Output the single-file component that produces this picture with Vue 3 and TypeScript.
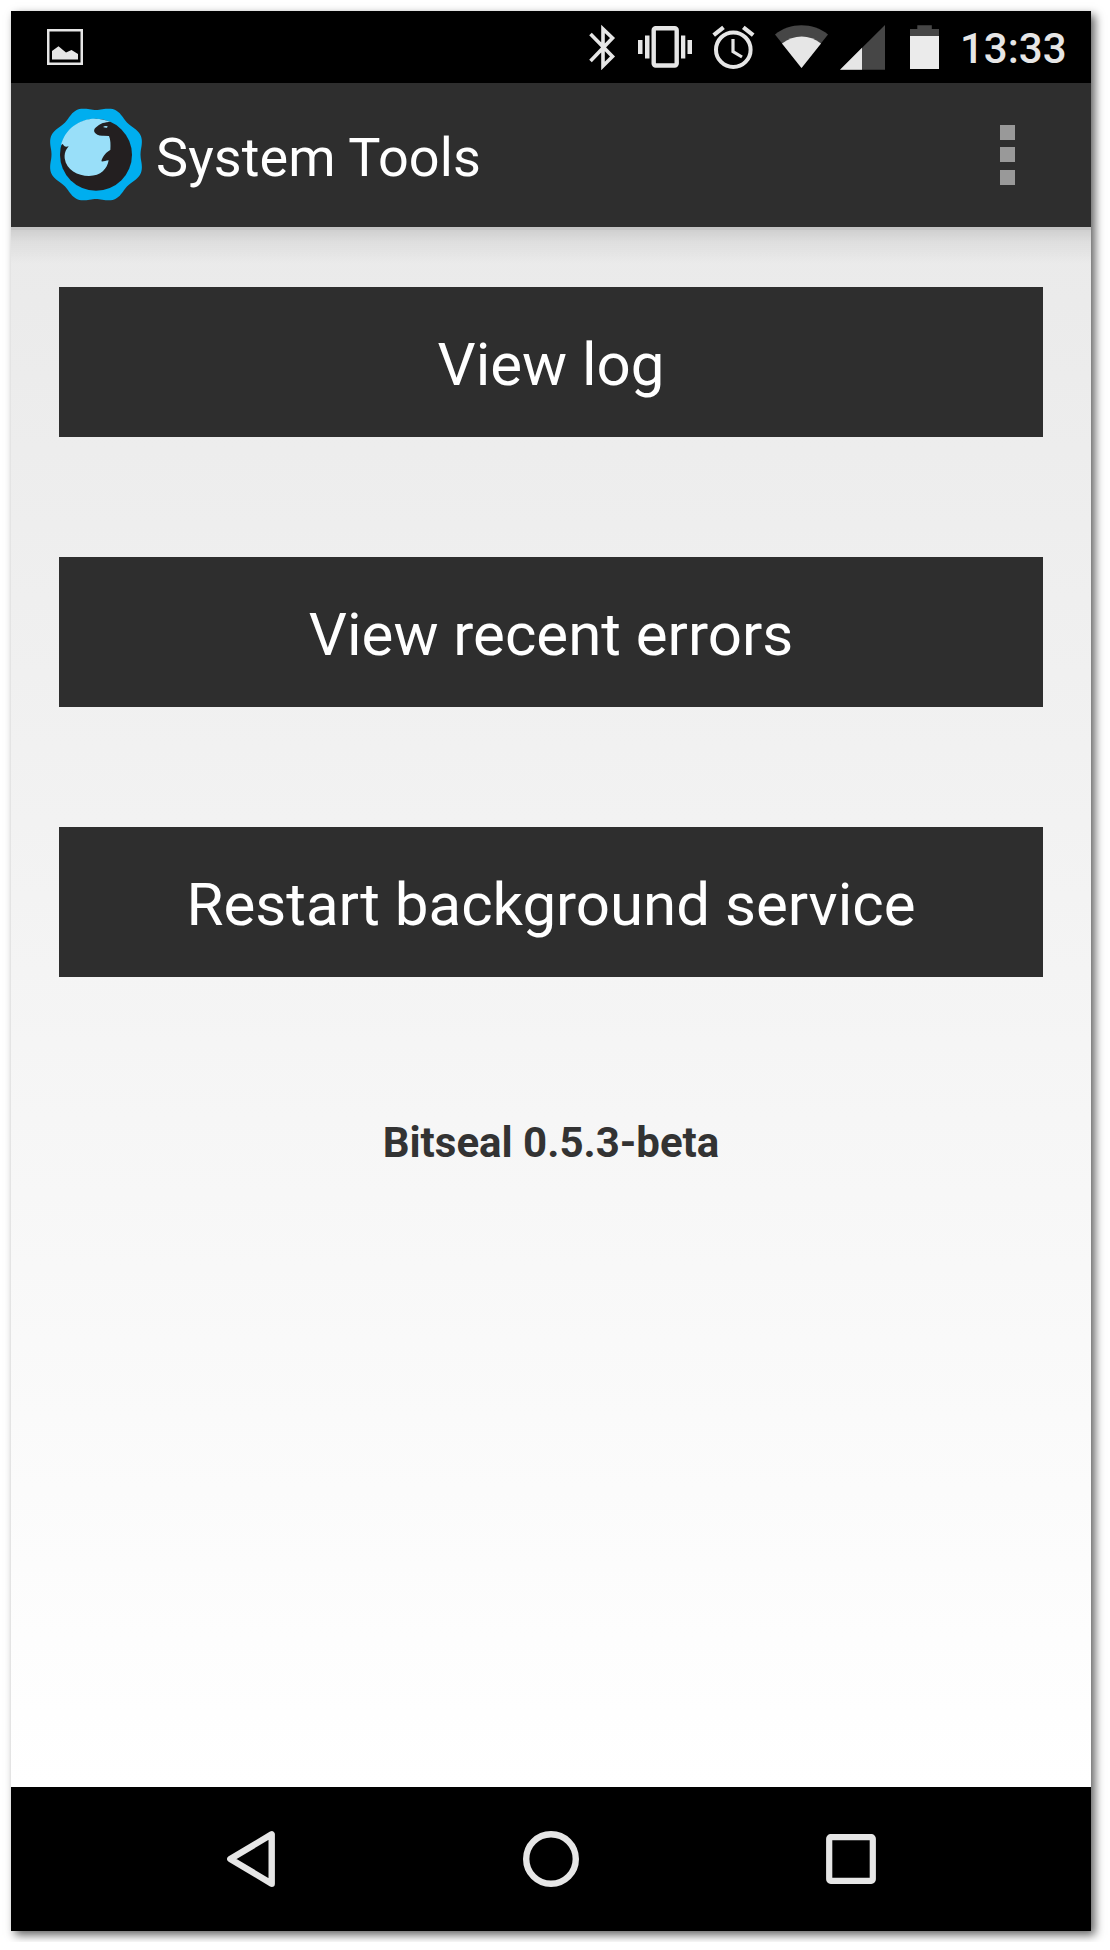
<script setup lang="ts">
interface Tool {
  id: string
  label: string
}

const tools: Tool[] = [
  { id: 'log', label: 'View log' },
  { id: 'errors', label: 'View recent errors' },
  { id: 'restart', label: 'Restart background service' },
]

// Eight-lobed badge outline behind the seal
const badgePoints: string = Array.from({ length: 180 }, (_, i) => {
  const angle = (i * 2 * Math.PI) / 180
  const radius = 139.5 + 6 * Math.cos(8 * (angle - Math.PI / 8))
  const x = 168 + radius * Math.cos(angle)
  const y = 178.5 + radius * Math.sin(angle)
  return `${x.toFixed(1)},${y.toFixed(1)}`
}).join(' ')
</script>

<template>
  <main class="phone">
    <header class="status">
      <svg class="picture" width="36" height="36" viewBox="0 0 36 36">
        <rect x="1.25" y="1.25" width="33.5" height="33.5" fill="none" stroke="#e6e6e6" stroke-width="2.5" />
        <path d="M5 30.5V22L11.500 17.200L19 23.500L24.500 21L31 25V30.500Z" fill="#e6e6e6" />
      </svg>
      <svg class="bluetooth" width="27" height="72" viewBox="589 11 27 72">
        <path d="M590.5 34L612.500 56.500L603 66V29L612.500 38L590.500 61" fill="none" stroke="#e6e6e6" stroke-width="3.6" />
      </svg>
      <svg class="vibrate" width="54" height="72" viewBox="638 11 54 72">
        <g fill="#e6e6e6">
          <rect x="638" y="40" width="4.500" height="14" />
          <rect x="645" y="35.500" width="4.500" height="23" />
          <rect x="681" y="35.500" width="4.300" height="23" />
          <rect x="687.500" y="40" width="4.500" height="14" />
        </g>
        <rect x="653.700" y="28.200" width="23" height="37.300" rx="2" fill="none" stroke="#e6e6e6" stroke-width="4.400" />
      </svg>
      <svg class="alarm" width="43" height="72" viewBox="712 11 43 72">
        <g fill="none" stroke="#e6e6e6">
          <circle cx="733.300" cy="49.700" r="17.300" stroke-width="4" />
          <path d="M713.700 35.200L723.500 27.300M743.300 27.300L753.200 35.200" stroke-width="4.200" />
          <path d="M733 39V51.500L742 57" stroke-width="3.200" />
        </g>
      </svg>
      <svg class="wifi" width="54" height="72" viewBox="775 11 54 72">
        <path d="M775 34.500C790 22.300 813 22.300 828 34.500L801.500 68Z" fill="#464646" />
        <path d="M782 43.500C794 34.200 809.500 34.200 821 43.500L801.500 68Z" fill="#e6e6e6" />
      </svg>
      <svg class="signal" width="45" height="72" viewBox="840 11 45 72">
        <path d="M840 69.700L885 25V69.700Z" fill="#464646" />
        <path d="M840 69.700L862 47.800V69.700Z" fill="#e6e6e6" />
      </svg>
      <svg class="battery" width="29" height="72" viewBox="910 11 29 72">
        <path d="M910 37V29H917.300V25.200H931.800V29H939V37Z" fill="#464646" />
        <rect x="910" y="36" width="29" height="33" fill="#ebebeb" />
      </svg>
      <time class="clock">13:33</time>
    </header>

    <div class="bar">
      <svg class="logo" width="100" height="100" viewBox="21 30 300 300">
        <polygon :points="badgePoints" fill="#00aeef" />
        <circle cx="168" cy="179.500" r="108" fill="#231f20" />
        <path
          d="M63 150C75 103 117 71 165 71C182 71 199 75 212 81C194 81 180 86 173 93C164 100 161 103 163 111C168 119 177 123 190 122L207 123C212 135 212 149 211 165C201 170 188 182 184 199C190 200 197 197 206 196C202 221 183 243 147 243C113 243 79 226 74 190C73 180 75 169 80 162L86 154C80 156 75 156 72 152L68 147Z"
          fill="#99dff9"
        />
        <path d="M189 96Q195 91 203 94L201 98Q196 99 189 96Z" fill="#99dff9" />
      </svg>
      <h1 class="title">System Tools</h1>
      <button class="more" aria-label="More options">
        <i></i><i></i><i></i>
      </button>
    </div>

    <section class="content">
      <button v-for="tool in tools" :key="tool.id" class="tool">{{ tool.label }}</button>
      <p class="version">Bitseal 0.5.3-beta</p>
    </section>

    <nav class="nav">
      <svg width="56" height="60" viewBox="223 1829 56 60">
        <path d="M271.700 1834.300V1883.700L230.300 1859Z" fill="none" stroke="#e6e6e6" stroke-width="6.400" stroke-linejoin="round" />
      </svg>
      <svg width="56" height="60" viewBox="523 1829 56 60">
        <circle cx="551" cy="1859" r="24.800" fill="none" stroke="#e6e6e6" stroke-width="6.400" />
      </svg>
      <svg width="56" height="60" viewBox="823 1829 56 60">
        <rect x="829.200" y="1837.200" width="43.600" height="43.600" rx="1.500" fill="none" stroke="#e6e6e6" stroke-width="6.200" />
      </svg>
    </nav>
  </main>
</template>

<style>
body {
  background: #fff;
}
</style>

<style scoped>
.phone {
  box-sizing: border-box;
  display: flex;
  flex-direction: column;
  width: 1080px;
  height: 1920px;
  margin: 11px;
  font-family: Roboto, sans-serif;
  box-shadow: 4px 4px 9px rgba(0, 0, 0, 0.62);
}

svg {
  display: block;
  flex: none;
}

button {
  border: 0;
  padding: 0;
  font-family: inherit;
}

.status {
  display: flex;
  align-items: center;
  height: 72px;
  background: #000;
}

.picture {
  margin-left: 36px;
}

.bluetooth {
  margin-left: 506px;
}

.vibrate {
  margin-left: 22px;
}

.alarm,
.wifi {
  margin-left: 20px;
}

.signal {
  margin-left: 11px;
}

.battery {
  margin-left: 25px;
}

.clock {
  margin: 3px 0 0 21px;
  font-size: 42px;
  font-weight: 500;
  line-height: 68px;
  color: #e6e6e6;
}

.bar {
  display: flex;
  align-items: center;
  height: 144px;
  background: #2e2e2e;
}

.logo {
  margin-left: 36px;
}

.title {
  margin: 5px 0 0 9px;
  font-size: 54px;
  font-weight: 400;
  line-height: 64px;
  letter-spacing: 0.1px;
  color: #fff;
}

.more {
  display: flex;
  flex-direction: column;
  gap: 7px;
  margin: 0 76px 0 auto;
  background: none;
}

.more i {
  width: 15px;
  height: 15px;
  background: #999;
}

.more i:last-child {
  margin-top: 1px;
}

.content {
  display: flex;
  flex: 1;
  flex-direction: column;
  gap: 120px;
  padding: 60px 48px 0;
  background:
    linear-gradient(#c4c4c4, #c4c4c4) 0 0 / 100% 3px no-repeat,
    linear-gradient(rgba(0, 0, 0, 0.13), rgba(0, 0, 0, 0.05) 40%, rgba(0, 0, 0, 0)) 0 0 / 100% 37px no-repeat,
    linear-gradient(#eaeaea, #fff);
}

.tool {
  height: 150px;
  padding-top: 6px;
  font-size: 60px;
  line-height: 70px;
  color: #fff;
  background: #2e2e2e;
}

.version {
  margin: 21px 0 0;
  font-size: 42px;
  font-weight: 700;
  line-height: 50px;
  text-align: center;
  color: #333;
}

.nav {
  display: flex;
  align-items: center;
  justify-content: center;
  gap: 244px;
  height: 144px;
  background: #000;
}
</style>
